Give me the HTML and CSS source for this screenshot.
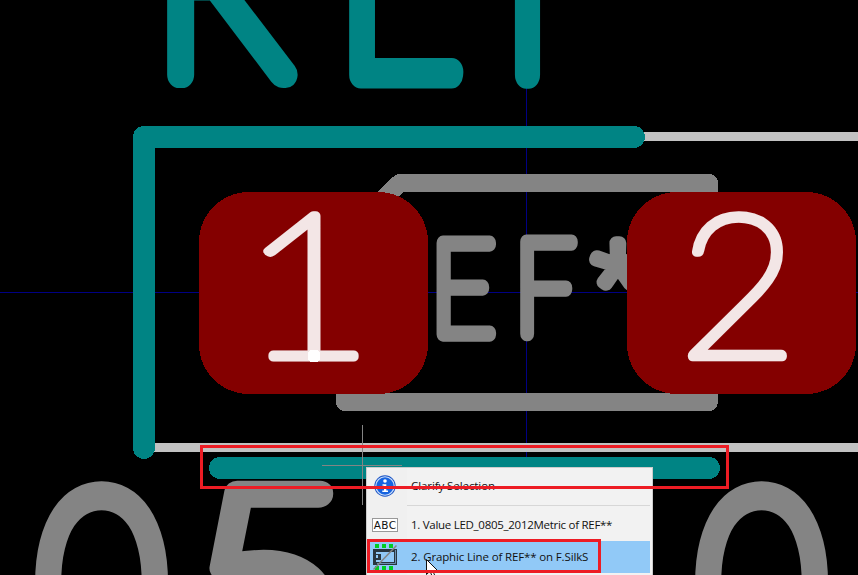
FILE: index.html
```html
<!DOCTYPE html>
<html lang="en">
<head>
<meta charset="utf-8">
<title>Footprint view</title>
<link rel="stylesheet" href="styles.css">
</head>
<body>
<main class="board">
  <svg class="canvas" width="858" height="575" viewBox="0 0 858 575" shape-rendering="crispEdges">
    <!-- origin axes -->
    <path class="axis" d="M0 292.5H858M526.5 0V575"/>
    <!-- courtyard -->
    <path class="courtyard" d="M640 136.5H858M150 447.5H858"/>
    <!-- fabrication outline -->
    <path class="fab" d="M709 183V402H345V237.7L399.7 183Z"/>
    <!-- fabrication texts -->
    <g class="fab-text">
      <text transform="matrix(1.14 0 0 1.31 429.7 334.4)">E</text>
      <text transform="matrix(1.1 0 0 1.31 513.8 334.4)">F</text>
      <text class="star" transform="matrix(1.04 0 0 1.02 589.4 319.5)">*</text>
    </g>
    <g class="value-text">
      <text transform="matrix(2.21 0 0 2.5 37.4 671.5)">0</text>
      <text transform="matrix(2.77 0 0 2.56 189.500 672)">5</text>
      <text transform="matrix(2.21 0 0 2.5 697.6 671.5)">0</text>
    </g>
    <!-- silkscreen -->
    <g class="ref-text">
      <text transform="matrix(2.35 0 0 2.593 152 74.7)">R</text>
      <text transform="matrix(2.22 0 0 2.65 335 74.7)">E</text>
      <text transform="matrix(2.131 0 0 2.65 501.5 74.7)">F</text>
    </g>
    <path class="silk" d="M634 137H144V448M220 468H709"/>
    <!-- pads -->
    <rect class="pad" x="199" y="192" width="229" height="202" rx="50"/>
    <rect class="pad" x="627" y="192" width="229" height="202" rx="50"/>
    <g class="pad-text">
      <text transform="matrix(2.3 0 0 2.01 241 357.2)">1</text>
      <text transform="matrix(2.04 0 0 1.99 679 357.2)">2</text>
    </g>
    <rect class="overlap" x="308" y="350" width="12" height="12" rx="4"/>
    <!-- crosshair -->
    <path class="crosshair" d="M362.5 425V505M322 465.5H402"/>
  </svg>

  <div class="menu">
    <div class="item title">
      <svg class="icon" width="26" height="26" viewBox="0 0 26 26">
        <circle cx="13" cy="13" r="10.7" fill="#1c55c4"/>
        <circle cx="13" cy="13" r="9.2" fill="#1764e0" stroke="#c9dcfa" stroke-width="1.1"/>
        <circle cx="13" cy="8" r="1.8" fill="#fff"/>
        <path d="M10.5 11.2H14.3V17.5H16V19H10.3V17.5H12V12.7H10.5Z" fill="#fff"/>
      </svg>
      <span class="label l1">Clarify Selection</span>
    </div>
    <div class="separator"></div>
    <div class="item">
      <span class="abc">ABC</span>
      <span class="label l2">1. Value LED_0805_2012Metric of REF**</span>
    </div>
    <div class="item active">
      <svg class="icon" width="26" height="27" viewBox="0 0 26 27">
        <path d="M3 0H7V4H3ZM10 0H14V4H10ZM17 0H21V4H17ZM3 22H7V26H3ZM10 22H14V26H10ZM17 22H21V26H17Z" fill="#0c2"/>
        <path d="M1 5H25V21H1Z" fill="#293640"/>
        <path d="M9 8H22V18H4V16H9V10H4V8Z" fill="#91c9f7"/>
        <path d="M4 11H6V14H4Z" fill="#91c9f7"/>
        <path d="M23.5 6V19.5H5" fill="none" stroke="#6b8faf"/>
        <path d="M1.5 25.5L24.5 1.5" stroke="#858585" stroke-width="1.5"/>
      </svg>
      <span class="label l3">2. Graphic Line of REF** on F.SilkS</span>
    </div>
  </div>
  <div class="mark mark-line"></div>
  <svg class="cursor" width="14" height="20" viewBox="0 0 14 20">
    <path d="M.5 .5V15.5L4 12.2L6.5 18L9 17L6.6 11.5H11.5Z" fill="#fff" stroke="#111"/>
  </svg>
  <div class="mark mark-item"></div>
</main>
</body>
</html>
```
FILE: styles.css
```css
body { margin: 0; background: #000; }
.board { position: relative; width: 858px; height: 575px; overflow: hidden; background: #000; }
.canvas { display: block; }

.canvas path { fill: none; stroke-linecap: round; stroke-linejoin: round; }
.canvas .axis { stroke: #000084; stroke-width: 1; }
.canvas .courtyard { stroke: #c2c2c2; stroke-width: 9; stroke-linecap: butt; }
.canvas .fab { stroke: #848484; stroke-width: 18; }
.canvas .silk { stroke: #008484; stroke-width: 22; }
.canvas .crosshair { stroke: #848484; stroke-width: 1; stroke-linecap: butt; }
.icon path, .icon circle { shape-rendering: auto; }
.pad { fill: #840000; }
.overlap { fill: #fff; }

.canvas text {
  font: 100 100px Lato, sans-serif;
  stroke-linecap: round;
  stroke-linejoin: round;
  vector-effect: non-scaling-stroke;
}
.fab-text text { fill: #848484; stroke: #848484; stroke-width: 13.8px; }
.canvas .star { font-family: "Noto Sans", sans-serif; }
.value-text text { fill: #848484; stroke: #848484; stroke-width: 25px; }
.ref-text text { fill: #008484; stroke: #008484; stroke-width: 25.5px; }
.pad-text text { fill: #f3e6e6; stroke: #f3e6e6; stroke-width: 9.5px; }

.menu {
  position: absolute;
  left: 366px;
  top: 467px;
  box-sizing: border-box;
  width: 287px;
  height: 120px;
  padding: 2px;
  border: 1px solid #ccc;
  background: linear-gradient(90deg, #f0f0f0 40px, #f2f2f2 40px);
  font: 11.5px "Open Sans", sans-serif;
  color: #111;
}
.item { display: flex; align-items: center; height: 32px; padding-left: 3px; }
.icon, .abc { flex: none; width: 26px; margin-right: 13px; }
.separator { height: 1px; margin: 3px 0 3px 38px; background: #d7d7d7; }
.abc {
  box-sizing: border-box;
  height: 14px;
  border: 1px solid #999;
  background: #fff;
  font: 10.5px/12px "DejaVu Sans", sans-serif;
  letter-spacing: .4px;
  text-align: center;
}
.active { background: #91c9f7; }
.label { white-space: nowrap; padding-bottom: 2px; }
.l1 { letter-spacing: -.08px; }
.l2 { letter-spacing: -.28px; }
.l3 { letter-spacing: -.14px; }

.mark { position: absolute; box-sizing: border-box; border: 3px solid #ed1c24; }
.mark-line { left: 200px; top: 445px; width: 529px; height: 44px; }
.mark-item { left: 367px; top: 539px; width: 234px; height: 34px; }
.cursor { position: absolute; left: 426px; top: 559px; }
```
